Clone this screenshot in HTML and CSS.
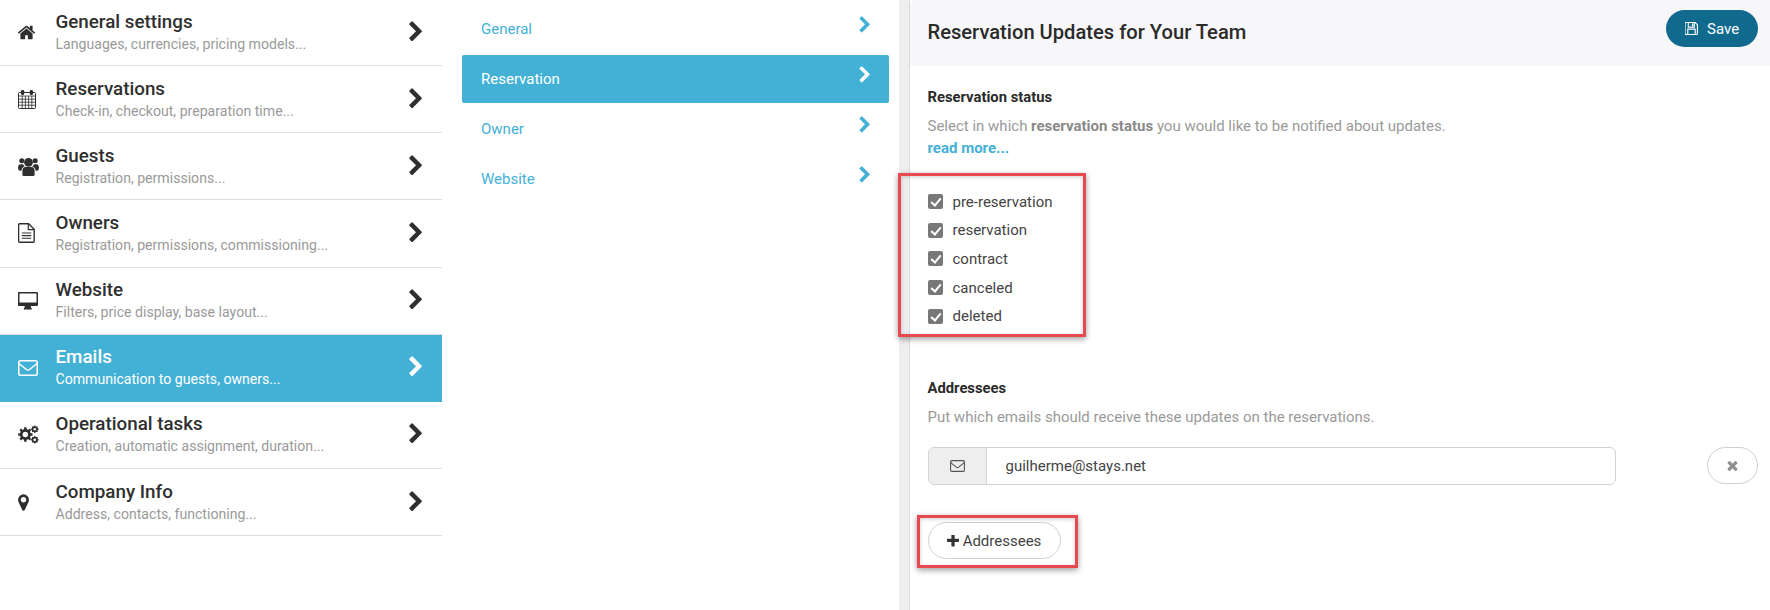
FILE: index.html
```html
<!DOCTYPE html>
<html lang="en">
<head>
<meta charset="utf-8">
<title>Reservation Updates for Your Team</title>
<link rel="stylesheet" href="styles.css">
</head>
<body>
<svg class="sprite" xmlns="http://www.w3.org/2000/svg">
  <symbol id="chev" viewBox="0 0 1792 1792"><path d="M1363 877l-742 742q-19 19-45 19t-45-19l-166-166q-19-19-19-45t19-45l531-531-531-531q-19-19-19-45t19-45l166-166q19-19 45-19t45 19l742 742q19 19 19 45t-19 45z"/></symbol>
  <symbol id="home" viewBox="0 0 1792 1792"><path d="M1472 992v480q0 26-19 45t-45 19h-384v-384h-256v384h-384q-26 0-45-19t-19-45v-480q0-1 .5-3t.5-3l575-474 575 474q1 2 1 6zm223-69l-62 74q-8 9-21 11h-3q-13 0-21-7l-692-577-692 577q-12 8-24 7-13-2-21-11l-62-74q-8-10-7-23.5t11-21.5l719-599q32-26 76-26t76 26l244 204v-195q0-14 9-23t23-9h192q14 0 23 9t9 23v408l219 182q10 8 11 21.5t-7 23.5z"/></symbol>
  <symbol id="cal" viewBox="0 0 18 20"><path d="M1.5 3.5h15a1 1 0 0 1 1 1v14a1 1 0 0 1-1 1h-15a1 1 0 0 1-1-1v-14a1 1 0 0 1 1-1z" fill="none" stroke="currentColor"/><path d="M1 7h16M1 10.2h16M1 13.2h16M1 16.2h16M4.2 7v12M7.4 7v12M10.6 7v12M13.8 7v12" fill="none" stroke="currentColor" stroke-width=".8"/><rect x="3" y="1" width="3.2" height="5" rx="1.2"/><rect x="11.8" y="1" width="3.2" height="5" rx="1.2"/></symbol>
  <symbol id="users" viewBox="0 0 20 19"><circle cx="10" cy="6" r="4.2"/><circle cx="3.6" cy="4.4" r="2.4"/><circle cx="16.4" cy="4.4" r="2.4"/><path d="M4.2 18.5v-4.5q0-3.6 3-3.6h5.600q3 0 3 3.600v4.500q-1 .5-3 .5h-5.600q-2 0-3-.5z"/><path d="M0 11.500q0-3.700 2.500-3.700h2.300q.6 1.500 1.700 2.200-3.200.8-3.200 4h-1.300q-2 0-2-2.500zM20 11.500q0-3.700-2.500-3.700h-2.300q-.6 1.500-1.700 2.200 3.200.8 3.200 4h1.300q2 0 2-2.500z"/></symbol>
  <symbol id="file" viewBox="0 0 16 19"><path d="M1.500.7h8.500l5.300 5.300v11.300a1 1 0 0 1-1 1h-12.800a1 1 0 0 1-1-1v-15.600a1 1 0 0 1 1-1z" fill="none" stroke="currentColor" stroke-width="1.300"/><path d="M9.700 1v5.300h5.300M3.500 9.500h9M3.500 12h9M3.500 14.500h9" fill="none" stroke="currentColor" stroke-width="1.100"/></symbol>
  <symbol id="desk" viewBox="0 0 20 18"><path d="M1.200 0h17.600q1.200 0 1.200 1.200v11.600q0 1.200-1.200 1.200h-6q0 1.500 1 2.500v1h-8v-1q1-1 1-2.500h-6q-1.200 0-1.200-1.200v-11.600q0-1.200 1.200-1.200zM1.500 1.500v9h17v-9z" fill-rule="evenodd"/></symbol>
  <symbol id="mail" viewBox="0 0 20 16"><rect x=".8" y=".8" width="18.400" height="14.400" rx="1.500" fill="none" stroke="currentColor" stroke-width="1.500"/><path d="M1 3.500l7.400 6q1.600 1.200 3.200 0l7.400-6" fill="none" stroke="currentColor" stroke-width="1.500"/></symbol>
  <symbol id="cogs" viewBox="0 0 20 18"><circle cx="7" cy="9" r="3.900" fill="none" stroke="currentColor" stroke-width="2.600"/><path d="M7 2.200v2.500M7 13.300v2.500M.2 9h2.500M11.300 9h2.500M2.200 4.200l1.800 1.800M10 12l1.800 1.800M11.800 4.200l-1.800 1.800M4 12l-1.800 1.800" stroke="currentColor" stroke-width="2.400"/><circle cx="16" cy="4" r="2.100" fill="none" stroke="currentColor" stroke-width="1.600"/><path d="M16 .4v1.500M16 6.100v1.500M12.400 4h1.500M18.100 4h1.500M13.500 1.500l1 1M17.500 5.500l1 1M18.500 1.500l-1 1M14.500 5.500l-1 1" stroke="currentColor" stroke-width="1.200"/><circle cx="16" cy="14" r="2.100" fill="none" stroke="currentColor" stroke-width="1.600"/><path d="M16 10.400v1.500M16 16.100v1.500M12.400 14h1.500M18.100 14h1.500M13.500 11.500l1 1M17.500 15.500l1 1M18.500 11.500l-1 1M14.500 15.500l-1 1" stroke="currentColor" stroke-width="1.200"/></symbol>
  <symbol id="pin" viewBox="380 128 1032 1538"><path d="M1152 640q0-106-75-181t-181-75-181 75-75 181 75 181 181 75 181-75 75-181zm256 0q0 109-33 179l-364 774q-16 33-47.500 52t-67.500 19-67.500-19-46.500-52l-365-774q-33-70-33-179 0-212 150-362t362-150 362 150 150 362z"/></symbol>
  <symbol id="plus" viewBox="192 192 1408 1408"><path d="M1600 736v192q0 40-28 68t-68 28h-416v416q0 40-28 68t-68 28h-192q-40 0-68-28t-28-68v-416h-416q-40 0-68-28t-28-68v-192q0-40 28-68t68-28h416v-416q0-40 28-68t68-28h192q40 0 68 28t28 68v416h416q40 0 68 28t28 68z"/></symbol>
  <symbol id="times" viewBox="0 0 1792 1792"><path d="M1490 1322q0 40-28 68l-136 136q-28 28-68 28t-68-28l-294-294-294 294q-28 28-68 28t-68-28l-136-136q-28-28-28-68t28-68l294-294-294-294q-28-28-28-68t28-68l136-136q28-28 68-28t68 28l294 294 294-294q28-28 68-28t68 28l136 136q28 28 28 68t-28 68l-294 294 294 294q28 28 28 68z"/></symbol>
  <symbol id="save" viewBox="0 0 14 14"><path d="M1 .6h10l2.400 2.400v9.400q0 1-1 1h-11.400q-1 0-1-1v-10.800q0-1 1-1z" fill="none" stroke="currentColor" stroke-width="1.200"/><path d="M3.500 1v4.500h6.500v-4.500M3 13v-5.300h8v5.300" fill="none" stroke="currentColor" stroke-width="1.200"/><rect x="7.500" y="1.500" width="1.500" height="3"/></symbol>
</svg>

<div class="page">
  <nav class="menu">
    <a class="menu-row"><span class="menu-icon"><svg class="ic-home"><use href="#home"/></svg></span><span class="menu-text"><b>General settings</b><small>Languages, currencies, pricing models...</small></span><svg class="menu-chev"><use href="#chev"/></svg></a>
    <a class="menu-row"><span class="menu-icon"><svg class="ic-cal"><use href="#cal"/></svg></span><span class="menu-text"><b>Reservations</b><small>Check-in, checkout, preparation time...</small></span><svg class="menu-chev"><use href="#chev"/></svg></a>
    <a class="menu-row"><span class="menu-icon"><svg class="ic-users"><use href="#users"/></svg></span><span class="menu-text"><b>Guests</b><small>Registration, permissions...</small></span><svg class="menu-chev"><use href="#chev"/></svg></a>
    <a class="menu-row"><span class="menu-icon"><svg class="ic-file"><use href="#file"/></svg></span><span class="menu-text"><b>Owners</b><small>Registration, permissions, commissioning...</small></span><svg class="menu-chev"><use href="#chev"/></svg></a>
    <a class="menu-row"><span class="menu-icon"><svg class="ic-desk"><use href="#desk"/></svg></span><span class="menu-text"><b>Website</b><small>Filters, price display, base layout...</small></span><svg class="menu-chev"><use href="#chev"/></svg></a>
    <a class="menu-row active"><span class="menu-icon"><svg class="ic-mail"><use href="#mail"/></svg></span><span class="menu-text"><b>Emails</b><small>Communication to guests, owners...</small></span><svg class="menu-chev"><use href="#chev"/></svg></a>
    <a class="menu-row"><span class="menu-icon"><svg class="ic-cogs"><use href="#cogs"/></svg></span><span class="menu-text"><b>Operational tasks</b><small>Creation, automatic assignment, duration...</small></span><svg class="menu-chev"><use href="#chev"/></svg></a>
    <a class="menu-row"><span class="menu-icon"><svg class="ic-pin"><use href="#pin"/></svg></span><span class="menu-text"><b>Company Info</b><small>Address, contacts, functioning...</small></span><svg class="menu-chev"><use href="#chev"/></svg></a>
  </nav>

  <nav class="submenu">
    <a class="sub-row">General<svg class="sub-chev"><use href="#chev"/></svg></a>
    <a class="sub-row active">Reservation<svg class="sub-chev"><use href="#chev"/></svg></a>
    <a class="sub-row">Owner<svg class="sub-chev"><use href="#chev"/></svg></a>
    <a class="sub-row">Website<svg class="sub-chev"><use href="#chev"/></svg></a>
  </nav>

  <main class="panel">
    <header class="panel-head">
      <h1>Reservation Updates for Your Team</h1>
      <button class="save"><svg><use href="#save"/></svg>Save</button>
    </header>
    <section class="panel-body">
      <h2>Reservation status</h2>
      <p class="desc first">Select in which <strong>reservation status</strong> you would like to be notified about updates.</p>
      <a class="more">read more...</a>
      <ul class="checks">
        <li><span class="box"></span>pre-reservation</li>
        <li><span class="box"></span>reservation</li>
        <li><span class="box"></span>contract</li>
        <li><span class="box"></span>canceled</li>
        <li><span class="box"></span>deleted</li>
      </ul>
      <h2 class="addr">Addressees</h2>
      <p class="desc second">Put which emails should receive these updates on the reservations.</p>
      <div class="email-line">
        <div class="email">
          <span class="addon"><svg><use href="#mail"/></svg></span>
          <span class="value">guilherme@stays.net</span>
        </div>
        <button class="remove"><svg><use href="#times"/></svg></button>
      </div>
      <button class="add"><svg><use href="#plus"/></svg>Addressees</button>
    </section>
  </main>

  <div class="mark mark-checks"></div>
  <div class="mark mark-add"></div>
</div>
</body>
</html>
```

FILE: styles.css
```css
* { box-sizing: border-box; }
html, body { margin: 0; height: 100%; overflow: hidden; background: #fff; }
body { font-family: Roboto, "Liberation Sans", sans-serif; color: #2f2f2f; }
.sprite { display: none; }
svg { fill: currentColor; display: block; flex: none; }

.page { position: relative; display: flex; width: 1770px; height: 610px; }

.menu { width: 442px; flex: none; margin-top: -1px; }
.menu-row { display: flex; align-items: center; height: 67.15px; border-bottom: 1px solid #dedede; color: #2f2f2f; }
.menu-row.active { background: #43b1d6; color: #fff; border-bottom-color: #43b1d6; }
.menu-icon { width: 56px; flex: none; padding-left: 18px; }
.ic-home { width: 19px; height: 19px; margin-left: -1px; }
.ic-cal { width: 18px; height: 20px; }
.ic-users { width: 21px; height: 20px; }
.ic-file { width: 17px; height: 20px; }
.ic-desk { width: 20px; height: 18px; }
.ic-mail { width: 20px; height: 16px; }
.ic-cogs { width: 21px; height: 19px; }
.ic-pin { width: 11px; height: 17px; }
.menu-text { flex: 1; display: flex; flex-direction: column; margin-left: -0.5px; padding-top: 1px; }
.menu-text b { font-size: 18.8px; font-weight: 500; line-height: 22px; }
.menu-text small { font-size: 14.1px; line-height: 22px; color: #9a9a9a; }
.active .menu-text small { color: #fff; }
.menu-chev { width: 22px; height: 22px; margin-right: 15px; margin-top: -1px; }

.submenu { width: 427px; flex: none; margin-left: 20px; padding-top: 5px; display: flex; flex-direction: column; gap: 2px; }
.sub-row { display: flex; justify-content: space-between; align-items: center; height: 48px; padding: 0 15px 0 19px; font-size: 15px; color: #43b1d6; border-radius: 2px; }
.sub-row.active { background: #43b1d6; color: #fff; }
.sub-chev { width: 18px; height: 18px; margin-top: -8px; }

.panel { margin-left: 10px; flex: 1; min-width: 0; border-left: 10px solid #eeeeee; position: relative; }
.panel::before { content: ""; position: absolute; left: 0; top: 0; bottom: 0; width: 1px; background: #dcdcdc; }
.panel-head { height: 66px; background: #f7f7f9; display: flex; align-items: flex-start; justify-content: space-between; padding: 10px 12px 0 18.5px; border-top-left-radius: 8px; }
.panel-head h1 { margin: 0; font-size: 20.15px; font-weight: 500; line-height: 45px; color: #2a2a2a; }
.save { display: flex; align-items: center; gap: 9px; width: 92px; height: 37px; padding: 0 0 0 19px; border: 0; border-radius: 19px; background: #0f6a8e; color: #fff; font: 400 15px Roboto, sans-serif; }
.save svg { width: 13px; height: 13px; }

.panel-body { padding: 21px 12px 0 18.5px; }
h2 { margin: 0; font-size: 14.8px; font-weight: 700; line-height: 20px; color: #2a2a2a; }
.desc { margin: 0; font-size: 15px; line-height: 22px; color: #9a9a9a; }
.desc strong { font-weight: 700; color: #8a8a8a; }
.desc.first { margin-top: 8px; }
.more { display: block; font-size: 15px; font-weight: 700; line-height: 22px; color: #43b1d6; }
.checks { list-style: none; margin: 28.5px 0 0; padding: 0; }
.checks li { display: flex; align-items: center; height: 28.6px; font-size: 15px; color: #444; gap: 10px; }
.box { width: 15px; height: 15px; border-radius: 2px; background: #787878; position: relative; }
.box::after { content: ""; position: absolute; left: 5px; top: 2px; width: 4px; height: 8px; border: solid #fff; border-width: 0 2.2px 2.2px 0; transform: rotate(40deg); }
.addr { margin-top: 48px; }
.desc.second { margin-top: 8px; }
.email-line { display: flex; justify-content: space-between; margin-top: 19px; }
.email { width: 688px; height: 38px; display: flex; border: 1px solid #d4d4d4; border-radius: 6px; overflow: hidden; }
.addon { width: 58px; background: #eeeeee; border-right: 1px solid #d4d4d4; display: flex; align-items: center; justify-content: center; color: #555; }
.addon svg { width: 15px; height: 12px; }
.value { padding-left: 19px; font-size: 15px; line-height: 37px; color: #444; }
.remove { width: 51px; height: 37px; border: 1px solid #d0d0d0; border-radius: 19px; background: #fff; color: #8f8f8f; display: flex; align-items: center; justify-content: center; padding: 0; }
.remove svg { width: 15px; height: 15px; }
.add { display: flex; align-items: center; justify-content: center; gap: 4px; margin-top: 37px; width: 133px; height: 37px; padding: 1px 0 0; border: 1px solid #d0d0d0; border-radius: 19px; background: #fff; color: #444; font: 400 15px Roboto, sans-serif; }
.add svg { width: 12px; height: 12px; color: #333; }

.mark { position: absolute; border: 3px solid #e8494f; box-shadow: 0 2px 6px rgba(0,0,0,.4), inset 0 1px 4px rgba(0,0,0,.2); }
.mark-checks { left: 898px; top: 173px; width: 188px; height: 164px; }
.mark-add { left: 917px; top: 515px; width: 161px; height: 53px; }
```
